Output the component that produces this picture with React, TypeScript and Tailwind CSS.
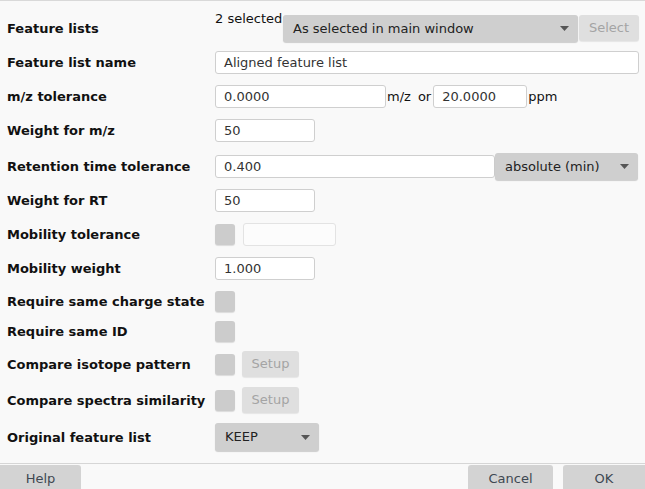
import type { ReactNode } from "react";

const font = { fontFamily: '"DejaVu Sans", "Liberation Sans", sans-serif' };

const Caret = () => (
  <svg width="9" height="5" viewBox="0 0 9 5" className="shrink-0">
    <path d="M0 0 L9 0 L4.5 5 Z" fill="#555" />
  </svg>
);

const Field = ({ value, w }: { value: string; w: string }) => (
  <div
    className={`${w} h-[23px] flex items-center rounded-[3px] border border-[#cfcfcf] bg-white pl-[8px] text-[13px] text-[#333] leading-none`}
  >
    {value}
  </div>
);

const Combo = ({ value, w, h, pad }: { value: string; w: string; h: string; pad: string }) => (
  <div
    className={`${w} ${h} ${pad} flex items-center justify-between rounded-[3px] bg-[#cfcfcf] pr-[9px] text-[13px] text-[#222] shadow-[0_1px_1px_rgba(0,0,0,0.18)]`}
  >
    <span>{value}</span>
    <Caret />
  </div>
);

const Check = () => (
  <div className="w-[20px] h-[21px] rounded-[3px] bg-[#cccccc] shadow-[0_1px_1px_rgba(0,0,0,0.12)] shrink-0" />
);

const Setup = () => (
  <div className="ml-[7px] w-[57px] h-[26px] flex items-center justify-center rounded-[3px] bg-[#dfdfdf] text-[13px] text-[#a4a4a4] shadow-[0_1px_1px_rgba(0,0,0,0.08)]">
    Setup
  </div>
);

const Row = ({ label, h, mt, children }: { label: string; h: string; mt: string; children: ReactNode }) => (
  <div className={`flex items-center ${h} ${mt}`}>
    <div className="w-[215px] shrink-0 pl-[7px] pt-[1px] text-[13px] font-bold text-[#111]">{label}</div>
    <div className="flex items-center">{children}</div>
  </div>
);

export default function App() {
  return (
    <div style={font} className="w-[645px] h-[489px] overflow-hidden bg-[#f9f9f9] border-t border-[#d9d9d9] flex flex-col">
      <div className="pt-[14px] flex flex-col">
        <Row label="Feature lists" h="h-[27px]" mt="mt-0">
          <div className="w-[68px] self-start -mt-[6px] text-[13px] text-[#111]">2 selected</div>
          <Combo value="As selected in main window" w="w-[295px]" h="h-[27px]" pad="pl-[10px]" />
          <div className="ml-[1px] w-[60px] h-[26px] flex items-center justify-center rounded-[3px] bg-[#dfdfdf] text-[13px] text-[#a4a4a4] self-start shadow-[0_1px_1px_rgba(0,0,0,0.08)]">
            Select
          </div>
        </Row>
        <Row label="Feature list name" h="h-[23px]" mt="mt-[9px]">
          <Field value="Aligned feature list" w="w-[424px]" />
        </Row>
        <Row label="m/z tolerance" h="h-[23px]" mt="mt-[11px]">
          <Field value="0.0000" w="w-[171px]" />
          <span className="ml-[1px] text-[13px] text-[#111]">m/z</span>
          <span className="ml-[7px] text-[13px] text-[#111]">or</span>
          <div className="ml-[2px]">
            <Field value="20.0000" w="w-[94px]" />
          </div>
          <span className="ml-[1px] text-[13px] text-[#111]">ppm</span>
        </Row>
        <Row label="Weight for m/z" h="h-[23px]" mt="mt-[11px]">
          <Field value="50" w="w-[100px]" />
        </Row>
        <Row label="Retention time tolerance" h="h-[27px]" mt="mt-[11px]">
          <Field value="0.400" w="w-[280px]" />
          <Combo value="absolute (min)" w="w-[143px]" h="h-[27px]" pad="pl-[10px]" />
        </Row>
        <Row label="Weight for RT" h="h-[23px]" mt="mt-[9px]">
          <Field value="50" w="w-[100px]" />
        </Row>
        <Row label="Mobility tolerance" h="h-[23px]" mt="mt-[11px]">
          <Check />
          <div className="ml-[8px] w-[93px] h-[23px] rounded-[3px] border border-[#e3e3e3] bg-[#fcfcfc]" />
        </Row>
        <Row label="Mobility weight" h="h-[23px]" mt="mt-[11px]">
          <Field value="1.000" w="w-[100px]" />
        </Row>
        <Row label="Require same charge state" h="h-[21px]" mt="mt-[11px]">
          <Check />
        </Row>
        <Row label="Require same ID" h="h-[21px]" mt="mt-[9px]">
          <Check />
        </Row>
        <Row label="Compare isotope pattern" h="h-[26px]" mt="mt-[9px]">
          <Check />
          <Setup />
        </Row>
        <Row label="Compare spectra similarity" h="h-[26px]" mt="mt-[10px]">
          <Check />
          <Setup />
        </Row>
        <Row label="Original feature list" h="h-[28px]" mt="mt-[10px]">
          <Combo value="KEEP" w="w-[104px]" h="h-[28px]" pad="pl-[10px]" />
        </Row>
      </div>
      <div className="mt-[12px] border-t border-[#d6d6d6]" />
      <div className="mt-[1px] flex items-start">
        <div className="w-[81px] h-[30px] flex items-center justify-center rounded-tr-[3px] bg-[#d3d3d3] text-[13px] text-[#3e4852] pb-[2px]">
          Help
        </div>
        <div className="flex-1" />
        <div className="w-[85px] h-[30px] flex items-center justify-center rounded-t-[3px] bg-[#d3d3d3] text-[13px] text-[#3e4852] pb-[2px]">
          Cancel
        </div>
        <div className="ml-[10px] w-[82px] h-[30px] flex items-center justify-center rounded-tl-[3px] bg-[#d3d3d3] text-[13px] text-[#3e4852] pb-[2px]">
          OK
        </div>
      </div>
    </div>
  );
}
